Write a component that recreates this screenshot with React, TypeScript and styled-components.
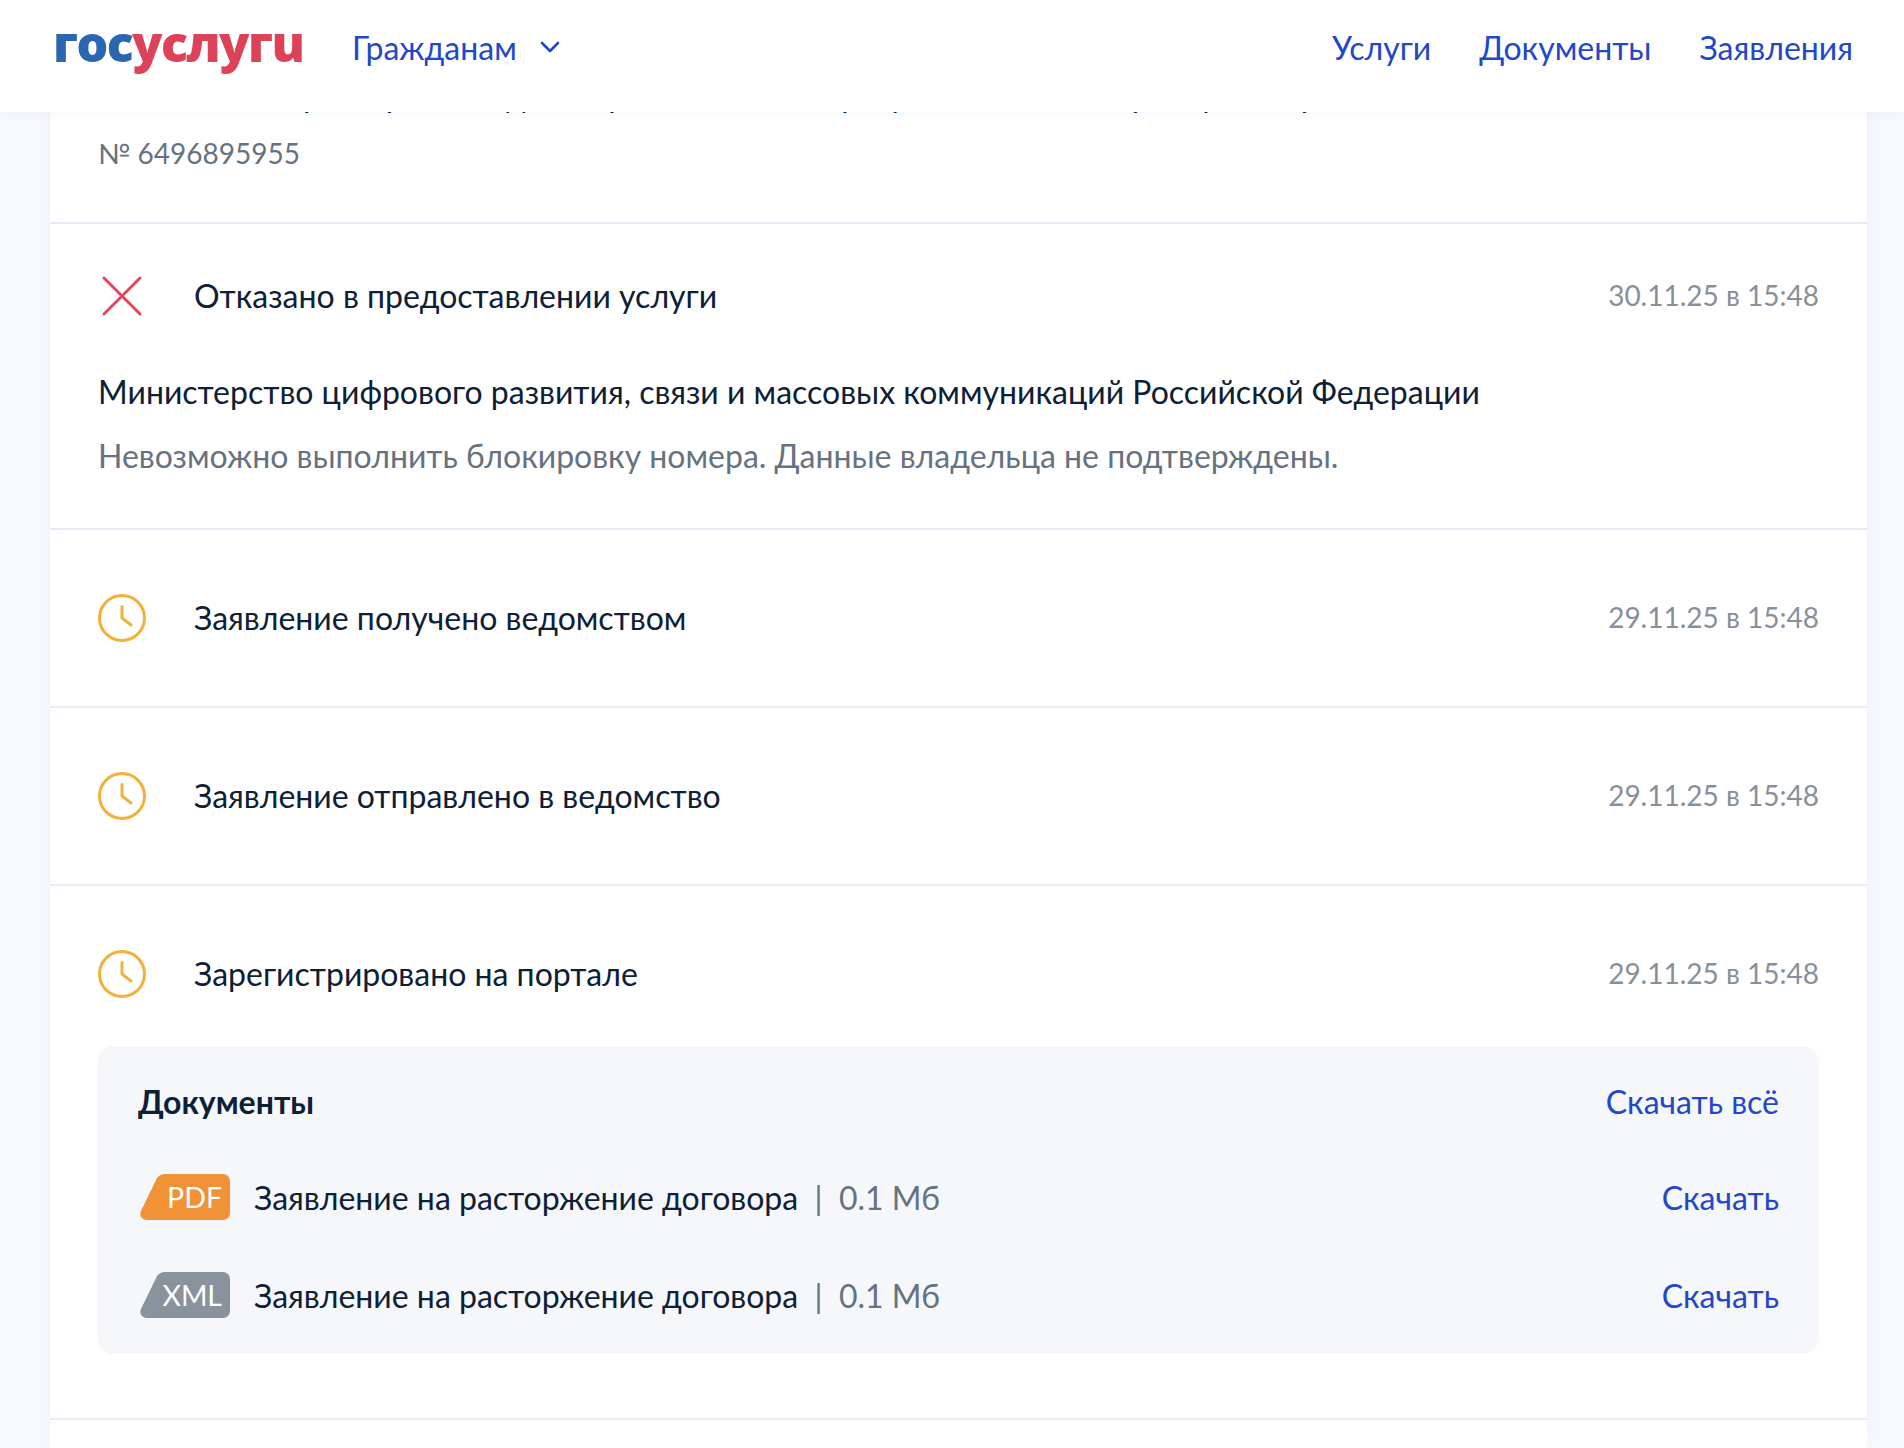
import React from 'react'
import styled, { createGlobalStyle } from 'styled-components'

const GlobalStyle = createGlobalStyle`
  html, body {
    margin: 0;
    padding: 0;
    background: #f8f9fe;
  }
  body {
    font-family: Lato, "Noto Sans", sans-serif;
    color: #0d2036;
  }
`

const Page = styled.div`
  position: relative;
  height: 1448px;
  overflow: hidden;
  background: #f8f9fe;
`

const Header = styled.header`
  position: absolute;
  top: 0;
  left: 0;
  right: 0;
  z-index: 2;
  height: 112px;
  padding: 0 51px 18px 53px;
  box-sizing: border-box;
  display: flex;
  align-items: center;
  background: #fff;
  box-shadow: 0 2px 8px rgba(20, 50, 120, 0.05);
`

const Logo = styled.div`
  width: 251px;
  font-family: "Open Sans", sans-serif;
  font-weight: 800;
  font-size: 50px;
  letter-spacing: -1.6px;
  line-height: 1;
  white-space: nowrap;
  color: #2b67b0;
  margin-top: -9px;
  span {
    color: #dc4359;
  }
`

const NavLink = styled.a<{ $gap?: number }>`
  font-size: 32px;
  color: #2148c9;
  margin-left: ${(p) => p.$gap ?? 0}px;
`

const Chevron = styled.svg`
  width: 24px;
  height: 24px;
  margin-left: 21px;
  margin-top: -1px;
`

const RightNav = styled.nav`
  margin-left: auto;
  display: flex;
  gap: 48px;
`

const Card = styled.main`
  margin: 0 37px 0 50px;
  background: #fff;
  box-shadow: 0 0 24px rgba(40, 70, 160, 0.035);
`

const TopBlock = styled.section`
  height: 224px;
  box-sizing: border-box;
  padding: 75px 48px 0;
  border-bottom: 2px solid #e6ebf5;
`

const HiddenTitle = styled.div`
  font-size: 32px;
  line-height: 40px;
  white-space: nowrap;
`

const RequestNumber = styled.div`
  margin-top: 20px;
  font-size: 28px;
  line-height: 36px;
  color: #66727f;
`

const Row = styled.section<{ $height: number; $top: number }>`
  min-height: ${(p) => p.$height}px;
  box-sizing: border-box;
  padding: ${(p) => p.$top}px 48px 0;
  border-bottom: 2px solid #e6ebf5;
  &:last-child {
    border-bottom: none;
  }
`

const StatusLine = styled.div`
  display: flex;
  align-items: center;
  height: 48px;
`

const IconBox = styled.div`
  width: 96px;
  flex: none;
  display: flex;
  align-items: center;
`

const StatusText = styled.div`
  font-size: 32px;
  line-height: 48px;
`

const Time = styled.div`
  margin-left: auto;
  margin-bottom: 2px;
  font-size: 28px;
  color: #86909c;
`

const Org = styled.div`
  margin-top: 52px;
  font-size: 32px;
  line-height: 40px;
`

const Reason = styled.div`
  margin-top: 24px;
  font-size: 32px;
  line-height: 40px;
  color: #66727f;
`

const Docs = styled.div`
  margin-top: 48px;
  height: 308px;
  box-sizing: border-box;
  padding: 33px 40px 0;
  background: #f5f7fb;
  border-radius: 16px;
`

const DocsHead = styled.div`
  display: flex;
  justify-content: space-between;
  align-items: center;
  height: 44px;
`

const DocsTitle = styled.div`
  font-size: 32px;
  font-weight: 700;
`

const DocLink = styled.a`
  font-size: 32px;
  color: #2148c9;
`

const DocRow = styled.div`
  display: flex;
  align-items: center;
  height: 46px;
  margin-top: 51px;
  & + & {
    margin-top: 52px;
  }
`

const Badge = styled.div`
  position: relative;
  width: 90px;
  height: 46px;
  flex: none;
  margin: 0 24px 0 2px;
`

const BadgeShape = styled.svg`
  position: absolute;
  inset: 0;
`

const BadgeLabel = styled.span`
  position: absolute;
  right: 8px;
  top: 0;
  line-height: 46px;
  font-size: 28.5px;
  color: #fff;
`

const DocName = styled.div`
  font-size: 32px;
`

const DocSize = styled.span`
  color: #66727f;
`

const DocDownload = styled(DocLink)`
  margin-left: auto;
`

const CrossSvg = styled.svg`
  margin-left: 4px;
`

const CrossIcon = () => (
  <CrossSvg width="40" height="40" viewBox="0 0 40 40" fill="none" stroke="#e5485c" strokeWidth="3" strokeLinecap="round">
    <path d="M2 2 38 38M38 2 2 38" />
  </CrossSvg>
)

const ClockIcon = () => (
  <svg width="48" height="48" viewBox="0 0 48 48" fill="none" stroke="#f0b23c" strokeWidth="3" strokeLinecap="round" strokeLinejoin="round">
    <circle cx="24" cy="24" r="22.5" />
    <path d="M24 12.500v11.500l9 7" />
  </svg>
)

const FileBadge = ({ label, color }: { label: string; color: string }) => (
  <Badge>
    <BadgeShape width="90" height="46" viewBox="0 0 90 46">
      <path
        d="M17 4C19 1.500 22 0 25 0h58a7 7 0 0 1 7 7v32a7 7 0 0 1-7 7H7C1.500 46-1 41 1 37Z"
        fill={color}
      />
    </BadgeShape>
    <BadgeLabel>{label}</BadgeLabel>
  </Badge>
)

const StatusRow = ({ date, text }: { date: string; text: string }) => (
  <Row $height={178} $top={64}>
    <StatusLine>
      <IconBox>
        <ClockIcon />
      </IconBox>
      <StatusText>{text}</StatusText>
      <Time>{date}</Time>
    </StatusLine>
  </Row>
)

export default function App() {
  return (
    <Page>
      <GlobalStyle />
      <Header>
        <Logo>
          гос<span>услугu</span>
        </Logo>
        <NavLink $gap={48}>Гражданам</NavLink>
        <Chevron viewBox="0 0 24 24" fill="none" stroke="#2148c9" strokeWidth="2.600" strokeLinecap="round" strokeLinejoin="round">
          <path d="M4 8l8 8 8-8" />
        </Chevron>
        <RightNav>
          <NavLink>Услуги</NavLink>
          <NavLink>Документы</NavLink>
          <NavLink>Заявления</NavLink>
        </RightNav>
      </Header>
      <Card>
        <TopBlock>
          <HiddenTitle>Заявление на расторжение договора об оказании услуг связи и блокировку номера</HiddenTitle>
          <RequestNumber>№ 6496895955</RequestNumber>
        </TopBlock>
        <Row $height={306} $top={48}>
          <StatusLine>
            <IconBox>
              <CrossIcon />
            </IconBox>
            <StatusText>Отказано в предоставлении услуги</StatusText>
            <Time>30.11.25 в 15:48</Time>
          </StatusLine>
          <Org>Министерство цифрового развития, связи и массовых коммуникаций Российской Федерации</Org>
          <Reason>Невозможно выполнить блокировку номера. Данные владельца не подтверждены.</Reason>
        </Row>
        <StatusRow text="Заявление получено ведомством" date="29.11.25 в 15:48" />
        <StatusRow text="Заявление отправлено в ведомство" date="29.11.25 в 15:48" />
        <Row $height={534} $top={64}>
          <StatusLine>
            <IconBox>
              <ClockIcon />
            </IconBox>
            <StatusText>Зарегистрировано на портале</StatusText>
            <Time>29.11.25 в 15:48</Time>
          </StatusLine>
          <Docs>
            <DocsHead>
              <DocsTitle>Документы</DocsTitle>
              <DocLink>Скачать всё</DocLink>
            </DocsHead>
            <DocRow>
              <FileBadge label="PDF" color="#f09235" />
              <DocName>
                Заявление на расторжение договора <DocSize>&nbsp;|&nbsp; 0.1 Мб</DocSize>
              </DocName>
              <DocDownload>Скачать</DocDownload>
            </DocRow>
            <DocRow>
              <FileBadge label="XML" color="#8a929e" />
              <DocName>
                Заявление на расторжение договора <DocSize>&nbsp;|&nbsp; 0.1 Мб</DocSize>
              </DocName>
              <DocDownload>Скачать</DocDownload>
            </DocRow>
          </Docs>
        </Row>
        <Row $height={28} $top={0} />
      </Card>
    </Page>
  )
}
